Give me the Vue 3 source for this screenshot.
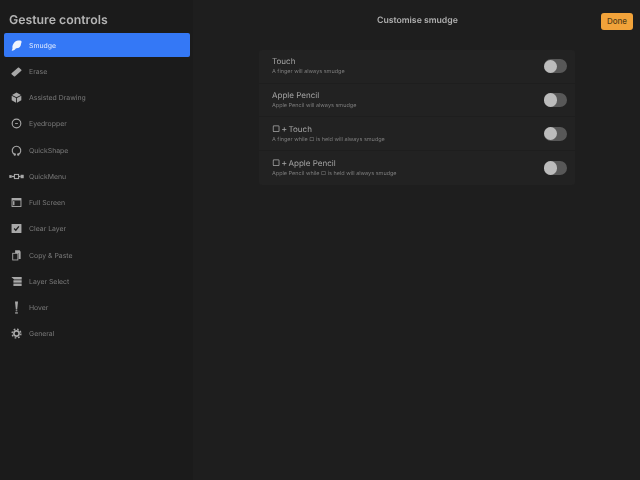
<script setup>
const items = [
  { label: 'Smudge', icon: 'smudge', active: true },
  { label: 'Erase', icon: 'erase' },
  { label: 'Assisted Drawing', icon: 'cube' },
  { label: 'Eyedropper', icon: 'eye' },
  { label: 'QuickShape', icon: 'shape' },
  { label: 'QuickMenu', icon: 'menu' },
  { label: 'Full Screen', icon: 'full' },
  { label: 'Clear Layer', icon: 'clear' },
  { label: 'Copy & Paste', icon: 'copy' },
  { label: 'Layer Select', icon: 'layers' },
  { label: 'Hover', icon: 'hover' },
  { label: 'General', icon: 'gear' },
]
const rows = [
  { mod: '', title: 'Touch', sub: 'A finger will always smudge' },
  { mod: '', title: 'Apple Pencil', sub: 'Apple Pencil will always smudge' },
  { mod: '▢ +', title: 'Touch', sub: 'A finger while ▢ is held will always smudge' },
  { mod: '▢ +', title: 'Apple Pencil', sub: 'Apple Pencil while ▢ is held will always smudge' },
]
</script>

<template>
  <div class="app">
    <aside class="side">
      <h1 class="heading">Gesture controls</h1>
      <ul class="list">
        <li v-for="it in items" :key="it.label" class="item" :class="{ active: it.active }">
          <svg class="ico" viewBox="0 0 16 16">
            <path v-if="it.icon === 'smudge'" fill="currentColor" d="M1 15.500c.8-1.500 1-2.500 1.200-3.500C1.500 8 4 3 8.500 1.200c2.500-.9 6.500-1 6.800.8.2 1.500-.6 2.500-.8 4-.3 2.800-2 5.300-4.800 5.800-1.500.3-2.500.4-3.300 1.300C5 14.500 3 15.800 1 15.500z"/>
            <g v-else-if="it.icon === 'erase'">
              <path fill="currentColor" d="M.8 10.500 10 2.500c.6-.5 1.300-.5 1.800 0l3.200 2.800c.5.500.5 1.200 0 1.700L6 14.800c-.6.500-1.300.5-1.800.1L.8 12c-.4-.4-.4-1.100 0-1.500z"/>
            </g>
            <g v-else-if="it.icon === 'cube'">
              <path fill="currentColor" d="M8 .8 14.500 4.300 8 7.700 1.500 4.300z"/>
              <path fill="currentColor" d="M1 5.400 7.400 8.700v6.800L1 12z"/>
              <path fill="currentColor" d="M15 5.400 8.600 8.700v6.800L15 12z"/>
            </g>
            <g v-else-if="it.icon === 'eye'" fill="none" stroke="currentColor">
              <circle cx="8" cy="8" r="6.300" stroke-width="1.600"/>
              <path d="M6 8h4" stroke-width="1.300"/>
            </g>
            <g v-else-if="it.icon === 'shape'" fill="none" stroke="currentColor" stroke-width="1.600">
              <path d="M5 13.500A6.200 6.200 0 1 1 11 13.500"/>
              <circle cx="5.500" cy="13.800" r=".9"/>
              <circle cx="10.500" cy="13.800" r=".9"/>
            </g>
            <g v-else-if="it.icon === 'menu'">
              <rect x="-2.500" y="6" width="3.500" height="4" fill="currentColor"/>
              <rect x="1" y="7" width="3.500" height="2" fill="currentColor"/>
              <rect x="5" y="5" width="6" height="6" fill="none" stroke="currentColor" stroke-width="1.500"/>
              <rect x="11.500" y="7" width="2.500" height="2" fill="currentColor"/>
              <rect x="14" y="5.500" width="4.500" height="5" fill="currentColor"/>
            </g>
            <g v-else-if="it.icon === 'full'">
              <rect x=".8" y="1.500" width="14.400" height="13" rx=".8" fill="currentColor"/>
              <rect x="2.200" y="5" width="11.600" height="8.200" fill="#1d1d1d"/>
              <rect x="3" y="6" width="2" height="6" fill="currentColor"/>
            </g>
            <g v-else-if="it.icon === 'clear'">
              <rect x=".8" y="1.500" width="14.400" height="13" rx=".8" fill="currentColor"/>
              <path d="M4.500 8l2.500 2.500L11.500 5" fill="none" stroke="#1d1d1d" stroke-width="1.800"/>
            </g>
            <g v-else-if="it.icon === 'copy'">
              <path fill="currentColor" d="M6 .5h6.500l1.500 2v10.500H11V4.500H6z"/>
              <rect x="2.500" y="4.800" width="7.500" height="9.700" fill="none" stroke="currentColor" stroke-width="1.300"/>
            </g>
            <g v-else-if="it.icon === 'layers'" fill="currentColor">
              <path d="M.5 1.500H15.500v3.500H4.500z"/>
              <rect x="3.500" y="6.200" width="12" height="3.500"/>
              <rect x="3.500" y="11" width="12" height="3.500"/>
            </g>
            <g v-else-if="it.icon === 'hover'" fill="currentColor">
              <path d="M5.800-.8h4.400L9 11H7z"/>
              <rect x="6.800" y="12" width="2.400" height="1.500"/>
              <rect x="6" y="15" width="4" height="1.800"/>
            </g>
            <g v-else fill="none" stroke="currentColor">
              <circle cx="8" cy="8" r="3.800" stroke-width="2.400"/>
              <circle cx="8" cy="8" r="6.400" stroke-width="2" stroke-dasharray="2.500 2.530"/>
            </g>
          </svg>
          <span class="lbl">{{ it.label }}</span>
        </li>
      </ul>
    </aside>
    <main class="main">
      <header class="top">
        <span class="title">Customise smudge</span>
        <button class="done">Done</button>
      </header>
      <section class="card">
        <div v-for="r in rows" :key="r.mod + r.title" class="row">
          <div class="text">
            <div class="rtitle"><span v-if="r.mod" class="mod">{{ r.mod }}</span>{{ r.title }}</div>
            <div class="rsub">{{ r.sub }}</div>
          </div>
          <div class="toggle"><span class="knob"></span></div>
        </div>
      </section>
    </main>
  </div>
</template>

<style>
html, body { margin: 0; background: #1e1e1e; }
</style>

<style scoped>
.app {
  width: 640px;
  height: 480px;
  display: flex;
  background: #1e1e1e;
  font-family: Inter, "Liberation Sans", sans-serif;
  text-rendering: geometricPrecision;
  overflow: hidden;
}
.side {
  width: 193px;
  flex: none;
  background: #1b1b1b;
  box-sizing: border-box;
  padding-top: 11px;
}
.heading {
  margin: 0 0 5px 9px;
  font-size: 12.300px;
  line-height: 17px;
  font-weight: 600;
  color: #b4b4b4;
  will-change: transform;
}
.list {
  list-style: none;
  margin: 0;
  padding: 0 3px 0 4px;
}
.item {
  height: 24.250px;
  margin-bottom: 2px;
  display: flex;
  align-items: center;
  padding-left: 6.500px;
  border-radius: 2px;
  font-size: 6.900px;
  color: #7a7a7a;
}
.lbl { will-change: transform; }
.item .ico {
  flex: none;
  width: 11px;
  height: 11px;
  margin-right: 7.500px;
  color: #a8a8a8;
  overflow: visible;
}
.item.active {
  background: #3478f6;
  color: #e4edfd;
}
.item.active .ico { color: #f0f4fc; }
.main {
  flex: 1;
  min-width: 0;
  display: flex;
  flex-direction: column;
}
.top {
  height: 50px;
  flex: none;
  display: flex;
  align-items: flex-start;
  justify-content: space-between;
  box-sizing: border-box;
  padding: 13px 7px 0 184px;
}
.title {
  font-size: 8.700px;
  line-height: 15px;
  font-weight: 600;
  color: #b0b0b0;
  margin-top: 0.500px;
  will-change: transform;
}
.done {
  width: 32px;
  height: 16.500px;
  border: 0;
  padding: 0;
  border-radius: 3px;
  background: #f2a33a;
  color: #574017;
  font: 500 8px Inter, "Liberation Sans", sans-serif;
}
.card {
  width: 316px;
  margin-left: 66px;
  border-radius: 3px;
  background: #222222;
}
.row {
  height: 33.700px;
  display: flex;
  align-items: center;
  justify-content: space-between;
  padding: 0 8px 0 13px;
  border-bottom: 0.5px solid #1e1e1e;
  box-sizing: border-box;
}
.row:last-child { border-bottom: 0; }
.text { will-change: transform; }
.rtitle {
  font-size: 8px;
  line-height: 11px;
  color: #a6a6a6;
  white-space: nowrap;
}
.mod {
  display: inline-block;
  width: 16.500px;
  font-size: 9px;
  line-height: 11px;
  white-space: nowrap;
  word-spacing: -1.500px;
}
.rsub {
  margin-top: 2px;
  font-size: 5.500px;
  line-height: 7px;
  color: #7c7c7c;
}
.toggle {
  width: 23.500px;
  height: 14px;
  border-radius: 7px;
  background: #585858;
  position: relative;
}
.knob {
  position: absolute;
  left: 0;
  top: 0.250px;
  width: 13.500px;
  height: 13.500px;
  border-radius: 50%;
  background: #bcbcbc;
}
</style>
